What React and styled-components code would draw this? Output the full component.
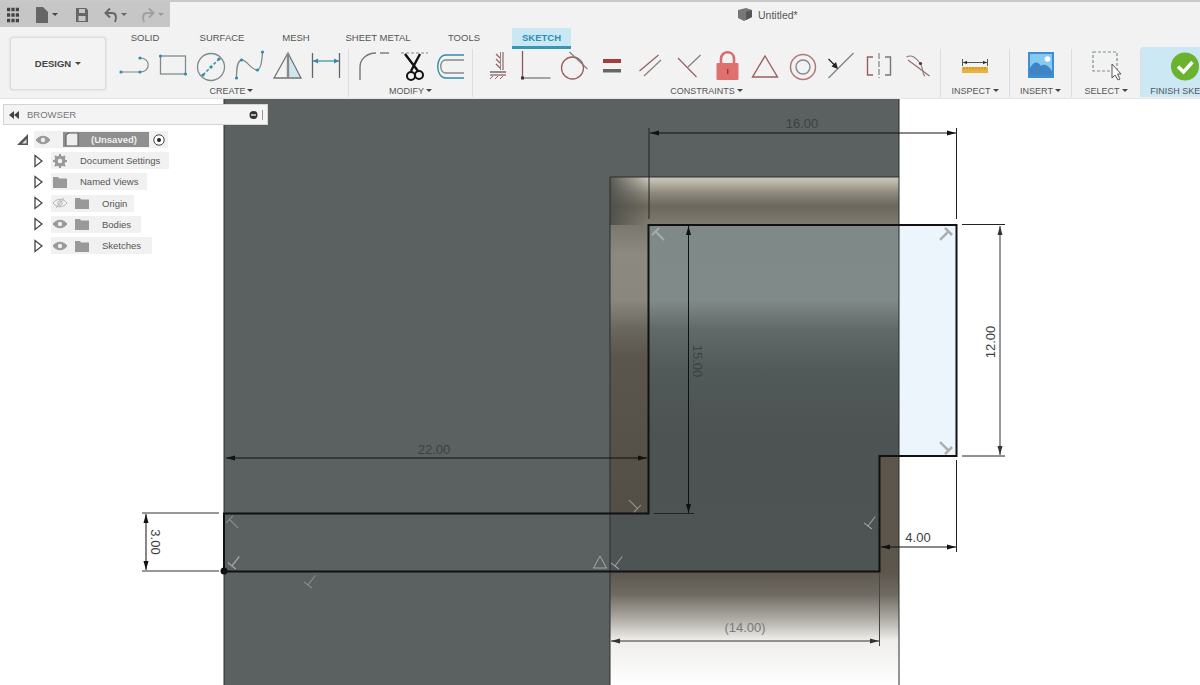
import React from "react";
import styled, { createGlobalStyle } from "styled-components";

const Global = createGlobalStyle`
    html, body {
        margin: 0;
        padding: 0;
        background: #fff;
        font-family: "Liberation Sans", Arial, sans-serif;
    }
`;

const Page = styled.div`
    width: 1200px;
    height: 685px;
    overflow: hidden;
    position: relative;
    display: flex;
    flex-direction: column;
`;

const Ribbon = styled.header`
    height: 99px;
    flex: none;
    background: #f2f2f2;
    border-top: 2px solid #c9c9c9;
    box-sizing: border-box;
    border-bottom: 1px solid #e4e4e4;
`;

const TopRow = styled.div`
    height: 25px;
    display: flex;
    align-items: center;
`;

const Qat = styled.div`
    width: 170px;
    height: 25px;
    background: #c6c6c6;
    display: flex;
    align-items: center;
    box-sizing: border-box;
    padding-left: 5px;
`;

const QatIcon = styled.svg`
    flex: none;
    width: ${props => props.$w || 16}px;
    height: 16px;
    margin-left: ${props => props.$m || 0}px;
`;

const Caret = styled.span`
    display: inline-block;
    width: 0;
    height: 0;
    margin-left: ${props => props.$m || 2}px;
    border-left: 3px solid transparent;
    border-right: 3px solid transparent;
    border-top: 3px solid ${props => props.$c || "#444"};
    vertical-align: middle;
`;

const Title = styled.div`
    margin-left: 568px;
    display: flex;
    align-items: center;
    gap: 6px;
    font-size: 10.5px;
    color: #555;
`;

const Body = styled.div`
    display: flex;
`;

const DesignButton = styled.div`
    width: 96px;
    height: 53px;
    margin: 10px 9px 0 10px;
    flex: none;
    box-sizing: border-box;
    background: #f3f3f3;
    border: 1px solid #dcdcdc;
    border-radius: 3px;
    box-shadow: 0 0 2px #ccc;
    display: flex;
    align-items: center;
    justify-content: center;
    font-size: 9.5px;
    font-weight: bold;
    color: #444;
`;

const Tools = styled.div`
    flex: 1;
    min-width: 0;
`;

const Tabs = styled.div`
    height: 22px;
    display: flex;
`;

const Tab = styled.div`
    width: ${props => props.$w}px;
    margin-left: ${props => props.$m || 0}px;
    margin-top: 1px;
    box-sizing: border-box;
    height: 21px;
    padding-bottom: 3px;
    display: flex;
    align-items: center;
    justify-content: center;
    font-size: 9.5px;
    color: #555;
    ${props => props.$active && `
        background: #c9e8f4;
        padding-bottom: 0;
        border-bottom: 3px solid #3897b5;
        color: #2b8fb0;
        font-weight: bold;
    `}
`;

const Groups = styled.div`
    display: flex;
    width: 1200px;
`;

const Group = styled.div`
    width: ${props => props.$w}px;
    flex: none;
    box-sizing: border-box;
    height: 48px;
    border-right: 1px solid ${props => props.$last ? "transparent" : "#dddddd"};
    display: flex;
    flex-direction: column;
`;

const FinishGroup = styled(Group)`
    background: #cbe8f4;
    margin-top: -2px;
    height: 50px;
    padding-top: 2px;
`;

const IconRow = styled.div`
    height: 32px;
    margin-top: 2px;
    padding-left: ${props => props.$p || 0}px;
    display: flex;
    justify-content: ${props => props.$center ? "center" : "flex-start"};
`;

const Cell = styled.div`
    width: ${props => props.$w || 38.2}px;
    flex: none;
    display: flex;
    justify-content: center;
`;

const Ico = styled.svg.attrs(() => ({ viewBox: "0 0 32 32" }))`
    width: 32px;
    height: 32px;
    overflow: visible;
    flex: none;
    fill: none;
`;

const GroupLabel = styled.div`
    height: 14px;
    margin-top: 1px;
    display: flex;
    align-items: center;
    justify-content: center;
    font-size: 9px;
    color: #555;
    white-space: nowrap;
`;

const Canvas = styled.main`
    flex: 1;
    position: relative;
    background: #fff;
`;

const Drawing = styled.svg`
    display: block;
    width: 1200px;
    height: 586px;
`;

const DimText = styled.text`
    font-family: "Liberation Sans", Arial, sans-serif;
    font-size: 13px;
    fill: ${props => props.$c || "#3a4242"};
    text-anchor: middle;
`;

const Browser = styled.aside`
    position: absolute;
    left: 3px;
    top: 5px;
    width: 265px;
`;

const BrowserHead = styled.div`
    height: 21px;
    box-sizing: border-box;
    background: #f4f4f4;
    border: 1px solid #d4d4d4;
    display: flex;
    align-items: center;
    padding: 0 2px 0 5px;
    font-size: 9.5px;
    color: #777;
`;

const HeadLabel = styled.span`
    flex: 1;
    margin-left: 8px;
`;

const Tree = styled.ul`
    list-style: none;
    margin: 0;
    padding: 4px 0 0;
`;

const Row = styled.li`
    height: 21.2px;
    display: flex;
    align-items: center;
    padding-left: ${props => props.$root ? 14 : 31}px;
    font-size: 9.5px;
    color: #555;
`;

const Chip = styled.div`
    height: 17px;
    display: flex;
    align-items: center;
    background: #f1f1f1;
    padding-left: 2px;
    padding-right: ${props => props.$pr}px;
    margin-left: ${props => props.$root ? 6 : 8}px;
`;

const RowIcon = styled.svg`
    flex: none;
    width: 14px;
    height: 14px;
    margin-right: ${props => props.$r || 0}px;
`;

const RowText = styled.span`
    margin-left: ${props => props.$m || 0}px;
    white-space: nowrap;
`;

const UnsavedChip = styled.div`
    width: 86px;
    height: 15px;
    margin-left: 5px;
    background: #8f8f8f;
    color: #eee;
    font-weight: bold;
    display: flex;
    align-items: center;
    box-sizing: border-box;
    padding-left: 2px;
`;

const BLUE = "#2f8ea8";
const LINE = "#7f8a8c";
const RED = "#9a5f5f";

const Dot = ({ x, y, c = BLUE, r = 1.6 }) => <circle cx={x} cy={y} r={r} fill={c} />;

const Eye = ({ off }) => (
    <RowIcon viewBox="0 0 14 14" $r={8}>
        <path d="M0 7 C4 2 10 2 14 7 C10 12 4 12 0 7Z" fill={off ? "none" : "#999"} stroke={off ? "#b5b5b5" : "#999"} />
        <circle cx="7" cy="7" r="2.2" fill={off ? "none" : "#eee"} stroke={off ? "#b5b5b5" : "none"} />
        {off && <path d="M3 12 L11 2" stroke="#b5b5b5" />}
    </RowIcon>
);

const Folder = () => (
    <RowIcon viewBox="0 0 14 14">
        <path d="M0 2 H5 L6 3.5 H14 V13 H0Z" fill="#999" />
    </RowIcon>
);

const Gear = () => (
    <RowIcon viewBox="0 0 14 14">
        <circle cx="7" cy="7" r="4.2" fill="none" stroke="#999" strokeWidth="2.6" />
        <path d="M7 0 V14 M0 7 H14 M2 2 L12 12 M12 2 L2 12" stroke="#999" strokeWidth="2" />
        <circle cx="7" cy="7" r="2.2" fill="#f1f1f1" />
    </RowIcon>
);

const Expand = () => (
    <svg width="9" height="14" viewBox="0 0 9 14" style={{ flex: "none" }}>
        <path d="M1 1.5 L8 7 L1 12.5Z" fill="#fff" stroke="#444" strokeWidth="1.3" />
    </svg>
);

const TreeRow = ({ icons, label, pr }) => (
    <Row>
        <Expand />
        <Chip $pr={pr}>
            {icons}
            <RowText $m={13}>{label}</RowText>
        </Chip>
    </Row>
);

// arrows for dimension lines point outward from the middle of the line
const Dim = ({ x1, y1, x2, y2, c = "#111" }) => {
    const vertical = x1 === x2;
    const head = (x, y, dir) => vertical
        ? <polygon points={`${x},${y} ${x - 2.5},${y + dir * 9} ${x + 2.5},${y + dir * 9}`} fill={c} />
        : <polygon points={`${x},${y} ${x + dir * 9},${y - 2.5} ${x + dir * 9},${y + 2.5}`} fill={c} />;
    return <g>
        <line x1={x1} y1={y1} x2={x2} y2={y2} stroke={c} />
        {head(x1, y1, 1)}
        {head(x2, y2, -1)}
    </g>;
};

const Mark = ({ x, y, a, c = "#8d9392", w = 1 }) => (
    <path transform={`translate(${x} ${y}) rotate(${a})`} d="M-7 0 H5 M5 -5 V5" stroke={c} strokeWidth={w} fill="none" />
);

const Sketch = () => (
    <Drawing viewBox="0 99 1200 586">
        <defs>
            <linearGradient id="strip" x1="0" y1="0" x2="0" y2="1">
                <stop offset="0" stopColor="#cfcbbb" />
                <stop offset="0.12" stopColor="#b8b4a6" />
                <stop offset="0.32" stopColor="#8f8b7e" />
                <stop offset="0.6" stopColor="#6b675d" />
                <stop offset="1" stopColor="#7f7b70" />
            </linearGradient>
            <linearGradient id="stripLeft" x1="0" y1="0" x2="1" y2="0">
                <stop offset="0" stopColor="#4e4e4a" stopOpacity="0.9" />
                <stop offset="1" stopColor="#4e4e4a" stopOpacity="0" />
            </linearGradient>
            <linearGradient id="side" x1="0" y1="0" x2="0" y2="1">
                <stop offset="0" stopColor="#7a786e" />
                <stop offset="0.1" stopColor="#8c8a80" />
                <stop offset="0.26" stopColor="#8a887e" />
                <stop offset="0.36" stopColor="#6a675f" />
                <stop offset="0.46" stopColor="#5a564e" />
                <stop offset="1" stopColor="#534e46" />
            </linearGradient>
            <linearGradient id="body" x1="0" y1="0" x2="0" y2="1">
                <stop offset="0" stopColor="#7f8a88" />
                <stop offset="0.216" stopColor="#808a89" />
                <stop offset="0.3" stopColor="#626a69" />
                <stop offset="0.42" stopColor="#525a59" />
                <stop offset="0.6" stopColor="#4c5352" />
                <stop offset="1" stopColor="#4e5453" />
            </linearGradient>
            <linearGradient id="bottom" x1="0" y1="0" x2="0" y2="1">
                <stop offset="0" stopColor="#5c564e" />
                <stop offset="0.2" stopColor="#6f6a62" />
                <stop offset="0.42" stopColor="#b0ada6" />
                <stop offset="0.6" stopColor="#eeedea" />
                <stop offset="1" stopColor="#ffffff" />
            </linearGradient>
        </defs>

        <rect x="224" y="99" width="675" height="586" fill="#5b6160" />
        <rect x="610" y="177" width="289" height="48" fill="url(#strip)" />
        <rect x="610" y="177" width="38" height="48" fill="url(#stripLeft)" />
        <rect x="610" y="225" width="38" height="288" fill="url(#side)" />
        <rect x="610" y="513" width="38" height="59" fill="#4e5453" />
        <rect x="648" y="225" width="251" height="347" fill="url(#body)" />
        <rect x="879" y="456" width="20" height="116" fill="#5c564c" />
        <rect x="610" y="572" width="289" height="113" fill="url(#bottom)" />
        <rect x="899" y="225" width="57" height="231" fill="#ebf5fb" />

        <path d="M224 99 V685 M610 177 V685 M899 99 V685 M610 177 H899" stroke="#2a2d2d" strokeWidth="1" fill="none" />
        <path d="M224 571.5 H879.5 V456 H956.5 V225 H648.5 V513.5 H224 V571.5Z" stroke="#111" strokeWidth="2" fill="none" />
        <circle cx="224" cy="571" r="3.5" fill="#111" />

        <path d="M649 128 V219 M956.5 128 V219" stroke="#222" />
        <Dim x1={650} y1={133} x2={956} y2={133} />
        <DimText x="802" y="128">16.00</DimText>

        <path d="M962 224.5 H1005 M962 456 H1005" stroke="#222" />
        <Dim x1={1000} y1={226} x2={1000} y2={455} c="#333" />
        <DimText transform="rotate(-90 995 342)" x="995" y="342">12.00</DimText>

        <path d="M654 513.5 H694" stroke="#222" />
        <Dim x1={688.5} y1={226} x2={688.5} y2={513} />
        <DimText transform="rotate(90 693 361)" x="693" y="361">15.00</DimText>

        <Dim x1={226} y1={458} x2={647} y2={458} />
        <DimText x="434" y="454">22.00</DimText>

        <path d="M142 513 H219 M142 571 H219" stroke="#333" />
        <Dim x1={146} y1={514} x2={146} y2={570} />
        <DimText transform="rotate(90 151 542)" x="151" y="542">3.00</DimText>

        <path d="M956.5 460 V552" stroke="#222" />
        <Dim x1={881} y1={547} x2={956} y2={547} />
        <DimText x="918" y="542">4.00</DimText>

        <path d="M879.5 573 V646" stroke="#444" />
        <Dim x1={611} y1={641} x2={879} y2={641} c="#333" />
        <DimText x="745" y="632" $c="#7a7a7a">(14.00)</DimText>

        <Mark x={659} y={235} a={225} c="#a6acaa" w={2} />
        <Mark x={945} y={235} a={-45} c="#a9afb0" w={2.5} />
        <Mark x={945} y={447} a={45} c="#a9afb0" w={2.5} />
        <Mark x={634} y={505} a={45} c="#9c9a92" />
        <Mark x={233} y={523} a={225} />
        <Mark x={235} y={562} a={128} c="#a2a8a7" w={1.3} />
        <Mark x={311} y={581} a={128} />
        <Mark x={618} y={562} a={128} c="#a2a8a7" />
        <Mark x={871} y={522} a={128} c="#a2a8a7" />
        <path d="M600 556 L606.5 568 H593.5Z" stroke="#a5abaa" fill="none" />
    </Drawing>
);

export default function App() {
    return <Page>
        <Global />
        <Ribbon>
            <TopRow>
                <Qat>
                    <QatIcon viewBox="0 0 16 16" $w={16}>
                        <path d="M2 2.5 H14 M2 8 H14 M2 13.5 H14" stroke="#444" strokeWidth="3.4" strokeDasharray="3.2 1.2" />
                    </QatIcon>
                    <QatIcon viewBox="0 0 16 16" $m={13}>
                        <path d="M2 0 H9 L14 5 V16 H2Z" fill="#666" />
                    </QatIcon>
                    <Caret $m={2} />
                    <QatIcon viewBox="0 0 16 16" $m={16}>
                        <path d="M2 1 H12 L14 3 V15 H2Z" fill="#666" />
                        <rect x="5" y="2" width="6" height="4" fill="#c6c6c6" />
                        <rect x="4.5" y="9" width="7" height="5" fill="#c6c6c6" />
                    </QatIcon>
                    <QatIcon viewBox="0 0 16 16" $m={13}>
                        <path d="M4 6 H9 C13 6 14 10 12 15 M7 1.5 L2.5 6 L7 10.5" stroke="#666" strokeWidth="2" fill="none" />
                    </QatIcon>
                    <Caret $m={2} $c="#666" />
                    <QatIcon viewBox="0 0 16 16" $m={13}>
                        <path d="M12 6 H7 C3 6 2 10 4 15 M9 1.5 L13.5 6 L9 10.5" stroke="#a0a0a0" strokeWidth="2" fill="none" />
                    </QatIcon>
                    <Caret $m={2} $c="#999" />
                </Qat>
                <Title>
                    <svg width="14" height="13" viewBox="0 0 14 13">
                        <path d="M0 2 L8 0 L14 2 V9 L6 13 L0 10Z" fill="#777" />
                        <path d="M8 4 L14 2 V9 L8 12Z" fill="#555" />
                    </svg>
                    Untitled*
                </Title>
            </TopRow>
            <Body>
                <DesignButton>DESIGN<Caret $m={4} /></DesignButton>
                <Tools>
                    <Tabs>
                        <Tab $w={60}>SOLID</Tab>
                        <Tab $w={94}>SURFACE</Tab>
                        <Tab $w={54}>MESH</Tab>
                        <Tab $w={110}>SHEET METAL</Tab>
                        <Tab $w={62}>TOOLS</Tab>
                        <Tab $w={59} $m={17} $active>SKETCH</Tab>
                    </Tabs>
                    <Groups>
                        <Group $w={234}>
                            <IconRow $p={1}>
                                <Cell>
                                    <Ico>
                                        <path d="M2 21 H21 C32 21 32 7 21 7" stroke={LINE} strokeWidth="1.2" />
                                        <Dot x={2} y={21} /><Dot x={21} y={21} /><Dot x={21} y={7} />
                                    </Ico>
                                </Cell>
                                <Cell>
                                    <Ico>
                                        <rect x="3.5" y="5" width="25" height="18" stroke={LINE} strokeWidth="1.3" />
                                        <Dot x={3.5} y={5} /><Dot x={28.5} y={23} />
                                    </Ico>
                                </Cell>
                                <Cell>
                                    <Ico>
                                        <circle cx="16" cy="16" r="13.5" stroke={LINE} strokeWidth="1.3" />
                                        <path d="M8 24 L24 8" stroke={BLUE} strokeWidth="1.5" strokeDasharray="3 2" />
                                        <Dot x={8} y={24} /><Dot x={16} y={16} /><Dot x={24} y={8} />
                                    </Ico>
                                </Cell>
                                <Cell>
                                    <Ico>
                                        <path d="M2.5 27 C2.5 18 3 10 7.5 9 C12 8 18 20 23.5 19 C27 18 28 10 28.5 1" stroke={LINE} strokeWidth="1.3" />
                                        <Dot x={2.5} y={27} /><Dot x={7.5} y={9} /><Dot x={23.5} y={19} /><Dot x={28.5} y={1} />
                                    </Ico>
                                </Cell>
                                <Cell>
                                    <Ico>
                                        <path d="M16 2 L29 27 H16Z" fill="#cfe6f0" />
                                        <path d="M16 2 L2 27 H29Z" stroke="#747474" strokeWidth="1.3" />
                                        <path d="M16 2 V27" stroke="#8a8a8a" strokeWidth="2.4" />
                                    </Ico>
                                </Cell>
                                <Cell>
                                    <Ico>
                                        <path d="M2.5 2 V27 M29.5 2 V27" stroke="#666" strokeWidth="1.3" />
                                        <path d="M3 10 H29" stroke={BLUE} strokeWidth="1.2" />
                                        <path d="M3 10 L8 7.5 V12.5Z M29 10 L24 7.5 V12.5Z" fill={BLUE} />
                                    </Ico>
                                </Cell>
                            </IconRow>
                            <GroupLabel>CREATE<Caret /></GroupLabel>
                        </Group>
                        <Group $w={124}>
                            <IconRow $p={5}>
                                <Cell $w={39}>
                                    <Ico>
                                        <path d="M2 29 V16 C2 8 9 2 18 2" stroke="#777" strokeWidth="1.4" />
                                        <path d="M22 2 H31" stroke="#777" strokeWidth="1.4" />
                                    </Ico>
                                </Cell>
                                <Cell $w={41}>
                                    <Ico>
                                        <path d="M3 2 H30" stroke="#888" strokeDasharray="3 2" />
                                        <path d="M7 3 L20 20 M22 3 L13 20" stroke="#111" strokeWidth="2.4" />
                                        <circle cx="21" cy="24" r="4" stroke="#111" strokeWidth="2" />
                                        <circle cx="13" cy="25" r="4" stroke="#111" strokeWidth="2" />
                                    </Ico>
                                </Cell>
                                <Cell $w={30}>
                                    <Ico>
                                        <path d="M31 4 H13 C2 4 2 27 13 27 H31" stroke={BLUE} strokeWidth="1.4" />
                                        <path d="M31 9 H13 C6 9 6 22 13 22 H31" stroke="#888" strokeWidth="1.4" />
                                    </Ico>
                                </Cell>
                            </IconRow>
                            <GroupLabel>MODIFY<Caret /></GroupLabel>
                        </Group>
                        <Group $w={468}>
                            <IconRow $p={5.5}>
                                <Cell>
                                    <Ico>
                                        <path d="M18.5 1 V19" stroke="#888" />
                                        <path d="M14 3 L18 7 M14 8 L18 12 M14 13 L18 17 M21 1 V19" stroke={RED} strokeWidth="1.2" />
                                        <path d="M8 21 H24" stroke="#555" strokeWidth="1.3" />
                                        <path d="M8 24 H24" stroke={RED} strokeWidth="1.3" />
                                        <path d="M11 25 L8 28 M16 25 L13 28 M21 25 L18 28" stroke={RED} />
                                    </Ico>
                                </Cell>
                                <Cell>
                                    <Ico>
                                        <path d="M2.5 0 V27" stroke="#8a5a5a" strokeWidth="1.3" />
                                        <path d="M2.5 27 H30.5" stroke="#777" strokeWidth="1.3" />
                                        <rect x="1" y="25.5" width="3" height="3" fill="#333" />
                                    </Ico>
                                </Cell>
                                <Cell>
                                    <Ico>
                                        <circle cx="14.5" cy="17" r="11" stroke={RED} strokeWidth="1.3" />
                                        <path d="M11.5 1 L29.5 18" stroke="#808080" strokeWidth="1.2" />
                                    </Ico>
                                </Cell>
                                <Cell>
                                    <Ico>
                                        <rect x="7" y="8" width="18" height="4" fill="#a43c3c" />
                                        <rect x="7" y="18" width="18" height="3.5" fill="#666" />
                                    </Ico>
                                </Cell>
                                <Cell>
                                    <Ico>
                                        <path d="M5.5 20 L24.5 4" stroke={RED} strokeWidth="1.2" />
                                        <path d="M10 25 L27 9" stroke="#808080" strokeWidth="1.2" />
                                    </Ico>
                                </Cell>
                                <Cell>
                                    <Ico>
                                        <path d="M5 7 L23.5 26" stroke={RED} strokeWidth="1.2" />
                                        <path d="M15 16 L27.5 4" stroke="#808080" strokeWidth="1.2" />
                                    </Ico>
                                </Cell>
                                <Cell>
                                    <Ico>
                                        <path d="M10 13 V8 C10 -1 23 -1 23 8 V13" stroke="#d96d6d" strokeWidth="2.6" />
                                        <rect x="5.5" y="12" width="22" height="17" rx="1" fill="#de7070" />
                                        <rect x="16" y="18" width="1.4" height="5" fill="#8a3a3a" />
                                    </Ico>
                                </Cell>
                                <Cell>
                                    <Ico>
                                        <path d="M16 5 L28.5 26 H3.5Z" stroke={RED} strokeWidth="1.4" />
                                    </Ico>
                                </Cell>
                                <Cell>
                                    <Ico>
                                        <circle cx="16" cy="16" r="12.5" stroke="#b27878" strokeWidth="1.5" />
                                        <circle cx="16" cy="16" r="7" stroke="#888" strokeWidth="1.4" />
                                    </Ico>
                                </Cell>
                                <Cell>
                                    <Ico>
                                        <path d="M3.5 27 L28.5 2" stroke="#808080" strokeWidth="1.2" />
                                        <path d="M3.5 8 L10 14.5" stroke="#222" strokeWidth="1.3" />
                                        <path d="M13 18 L6.5 15.5 L11 11Z" fill="#222" />
                                    </Ico>
                                </Cell>
                                <Cell>
                                    <Ico>
                                        <path d="M10 6 H4.5 V24 H10" stroke={RED} strokeWidth="1.4" />
                                        <path d="M22 6 H27.5 V24 H22" stroke="#777" strokeWidth="1.4" />
                                        <path d="M16 2 V27" stroke="#8a8a8a" strokeWidth="1.3" strokeDasharray="6 2" />
                                    </Ico>
                                </Cell>
                                <Cell>
                                    <Ico>
                                        <path d="M6 9 L27.5 25" stroke="#9a6a6a" strokeWidth="1.2" />
                                        <path d="M4.5 6 C10 3 14 7 18 12 C22 18 20 24 23 25" stroke="#808080" strokeWidth="1.1" />
                                        <Dot x={18.5} y={12.5} c="#5c2e2e" />
                                    </Ico>
                                </Cell>
                            </IconRow>
                            <GroupLabel>CONSTRAINTS<Caret /></GroupLabel>
                        </Group>
                        <Group $w={69}>
                            <IconRow $center>
                                <Ico>
                                    <path d="M3.5 8 V15 M28.5 8 V15" stroke="#555" />
                                    <path d="M4 11.5 H28" stroke="#555" />
                                    <path d="M4 11.5 L8 9.8 V13.2Z M28 11.5 L24 9.8 V13.2Z" fill="#333" />
                                    <rect x="3" y="16" width="26" height="6" fill="#e8b33c" />
                                    <path d="M5 16 V18.5 M8 16 V18.5 M11 16 V18.5 M14 16 V18.5 M17 16 V18.5 M20 16 V18.5 M23 16 V18.5 M26 16 V18.5" stroke="#b98a20" />
                                </Ico>
                            </IconRow>
                            <GroupLabel>INSPECT<Caret /></GroupLabel>
                        </Group>
                        <Group $w={62}>
                            <IconRow $center>
                                <Ico>
                                    <rect x="3" y="1" width="26" height="26" fill="#3f8fd0" />
                                    <rect x="5" y="3" width="22" height="21" fill="#86c8f2" />
                                    <circle cx="22.5" cy="8" r="2.8" fill="#fff" />
                                    <path d="M5 24 V17 C9 10 13 10 16 15 C19 12 24 15 27 20 V24Z" fill="#3f85c6" />
                                </Ico>
                            </IconRow>
                            <GroupLabel>INSERT<Caret /></GroupLabel>
                        </Group>
                        <Group $w={69}>
                            <IconRow $center>
                                <Ico>
                                    <rect x="3" y="1" width="24" height="19" stroke="#7f8f88" strokeWidth="1.2" strokeDasharray="3 2" />
                                    <path d="M22 13 V27 L25 24 L28 29 L30 28 L27.5 23 L31 23Z" fill="#fff" stroke="#555" />
                                </Ico>
                            </IconRow>
                            <GroupLabel>SELECT<Caret /></GroupLabel>
                        </Group>
                        <FinishGroup $w={88} $last>
                            <IconRow $center>
                                <Ico>
                                    <circle cx="16" cy="15.5" r="14" fill="#6bb32e" />
                                    <path d="M9 15.5 L14.5 21 L23.5 11" stroke="#fff" strokeWidth="3.4" />
                                </Ico>
                            </IconRow>
                            <GroupLabel>FINISH SKETCH</GroupLabel>
                        </FinishGroup>
                    </Groups>
                </Tools>
            </Body>
        </Ribbon>
        <Canvas>
            <Sketch />
            <Browser>
                <BrowserHead>
                    <svg width="10" height="8" viewBox="0 0 10 8">
                        <path d="M5 0 V8 L0 4Z M10 0 V8 L5 4Z" fill="#444" />
                    </svg>
                    <HeadLabel>BROWSER</HeadLabel>
                    <svg width="16" height="10" viewBox="0 0 16 10">
                        <circle cx="4.5" cy="5" r="4" fill="#333" />
                        <rect x="2" y="4.3" width="5" height="1.4" fill="#eee" />
                        <path d="M13.5 0 V10" stroke="#999" />
                    </svg>
                </BrowserHead>
                <Tree>
                    <Row $root>
                        <svg width="11" height="11" viewBox="0 0 11 11" style={{ flex: "none" }}>
                            <path d="M0 11 L11 0 V11Z" fill="#555" />
                            <path d="M5 9.5 L9.5 5 V9.5Z" fill="#ddd" />
                        </svg>
                        <Chip $root $pr={3}>
                            <Eye />
                            <UnsavedChip>
                                <svg width="14" height="13" viewBox="0 0 14 13" style={{ flex: "none" }}>
                                    <path d="M1 2 L4 0 H13 V13 H1Z" fill="#eee" stroke="#555" />
                                </svg>
                                <RowText $m={12}>(Unsaved)</RowText>
                            </UnsavedChip>
                            <svg width="12" height="12" viewBox="0 0 12 12" style={{ flex: "none", marginLeft: 4 }}>
                                <circle cx="6" cy="6" r="5.2" fill="#fff" stroke="#444" />
                                <circle cx="6" cy="6" r="2" fill="#222" />
                            </svg>
                        </Chip>
                    </Row>
                    <TreeRow icons={<Gear />} label="Document Settings" pr={9} />
                    <TreeRow icons={<Folder />} label="Named Views" pr={9} />
                    <TreeRow icons={<><Eye off /><Folder /></>} label="Origin" pr={7} />
                    <TreeRow icons={<><Eye /><Folder /></>} label="Bodies" pr={10} />
                    <TreeRow icons={<><Eye /><Folder /></>} label="Sketches" pr={11} />
                </Tree>
            </Browser>
        </Canvas>
    </Page>;
}
